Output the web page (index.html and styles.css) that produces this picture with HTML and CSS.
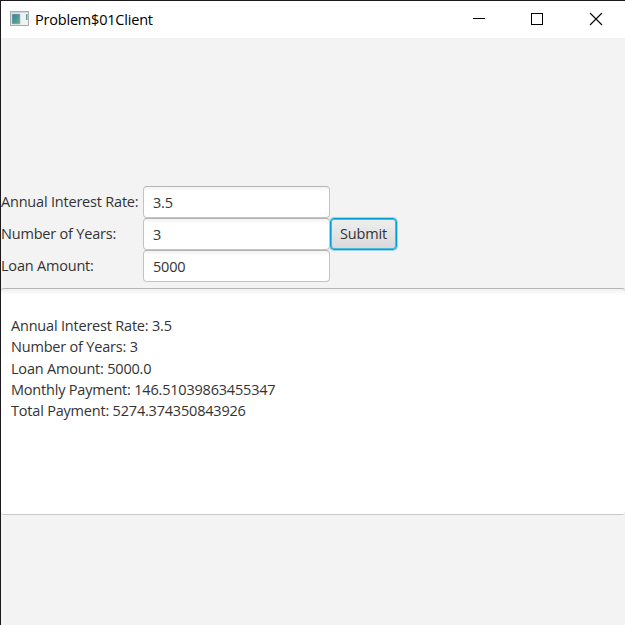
FILE: index.html
```html
<!DOCTYPE html>
<html lang="en">
<head>
<meta charset="utf-8">
<title>Problem$01Client</title>
<link rel="stylesheet" href="styles.css">
</head>
<body>
<div class="window">
  <header class="titlebar">
    <svg class="app-icon" width="19" height="15" viewBox="0 0 19 15">
      <defs><linearGradient id="g" x1="0" y1="0" x2="1" y2="1"><stop offset="0" stop-color="#397bad"/><stop offset="1" stop-color="#61b27c"/></linearGradient></defs>
      <rect x=".5" y=".5" width="18" height="14" fill="#f0f1f2" stroke="#a9adb1"/>
      <rect x="1" y="1" width="17" height="1" fill="#d3d6d8"/>
      <rect x="2" y="3" width="8" height="10" fill="url(#g)" stroke="#a7b8bd" stroke-width=".6"/>
      <rect x="16" y="3" width="1.5" height="6" fill="#5ba09a"/>
    </svg>
    <h1 class="title">Problem$01Client</h1>
    <svg class="controls" width="130" height="14" viewBox="0 0 130 14" fill="none" stroke="#000">
      <path d="M0 6.5h12"/>
      <rect x="58.5" y="1.5" width="11" height="11"/>
      <path d="M117 1l12 12M129 1l-12 12" stroke-width="1.1"/>
    </svg>
  </header>
  <main class="content">
    <form class="form">
      <label>Annual Interest Rate:</label><div class="field">3.5</div><span></span>
      <label>Number of Years:</label><div class="field">3</div><button class="submit" type="button">Submit</button>
      <label>Loan Amount:</label><div class="field">5000</div>
    </form>
    <section class="output">
      <p>Annual Interest Rate: 3.5</p>
      <p>Number of Years: 3</p>
      <p>Loan Amount: 5000.0</p>
      <p>Monthly Payment: 146.51039863455347</p>
      <p>Total Payment: 5274.374350843926</p>
    </section>
  </main>
</div>
</body>
</html>
```
FILE: styles.css
```css
* { box-sizing: border-box; }
body {
  margin: 0;
  background: #f3f3f3;
  color: #333;
  font: 14.5px/20px "Open Sans", "Noto Sans", sans-serif;
  letter-spacing: -0.2px;
}
.window {
  height: 625px;
  border: solid #1b191d;
  border-width: 1px 0 0 1px;
  overflow: hidden;
}
.titlebar {
  display: flex;
  align-items: flex-start;
  height: 37px;
  background: #fff;
}
.app-icon { margin: 10px 0 0 9px; }
.title {
  margin: 9px 0 0 6px;
  font: inherit;
  color: #000;
}
.controls { margin: 11px 22px 0 auto; }
.content { padding-top: 148px; }
.form {
  display: grid;
  grid-template-columns: 142px 187px 67px;
  grid-auto-rows: 32px;
  align-items: center;
}
.form label { white-space: nowrap; }
.field {
  height: 32px;
  padding: 6px 9px;
  background: linear-gradient(#f3f3f3, #fff 5px);
  border: 1px solid #c3c3c3;
  border-top-color: #b5b5b5;
  border-radius: 4px;
}
.submit {
  width: 67px;
  height: 32px;
  padding: 0;
  font: inherit;
  letter-spacing: inherit;
  color: #333;
  background: linear-gradient(#efefef, #d9d9d9);
  border: 1px solid #039ed3;
  border-radius: 4px;
  box-shadow: 0 0 0 1px #9bd6ec, inset 0 0 0 1px #4cb9de;
}
.output {
  height: 227px;
  margin-top: 6px;
  padding: 26px 10px 0;
  background: linear-gradient(#efefef, #fff 6px);
  border: 1px solid #c8c8c8;
  border-top-color: #b5b5b5;
  border-width: 1px 0;
  border-radius: 3px;
}
.output p {
  margin: 0;
  line-height: 21.25px;
  white-space: nowrap;
}
```
